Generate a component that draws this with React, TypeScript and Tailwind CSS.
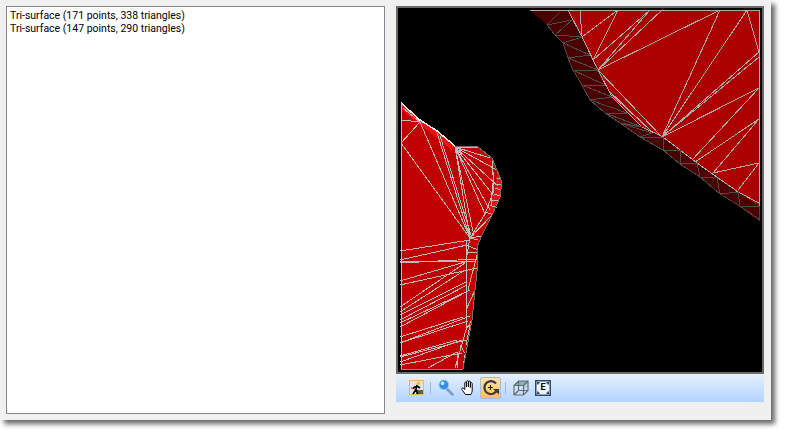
type Seg = [number, number, number, number];

// all mesh coordinates are page pixels, the svg viewBox is shifted to match
const LOWER_EDGE =
  '455,146 478,147 492,158 497,170 502,182 500,197 492,215 482,235 477,247 478,262 475,290 472,320 463,369';
const LOWER_OUTLINE = `401,103 420,120 437,131 ${LOWER_EDGE} 401,369`;

const LOWER_LINES: Seg[] = [
  [401, 120, 420, 122], [403, 108, 420, 122], [420, 122, 401, 143], [401, 143, 470, 238],
  [420, 122, 470, 238], [437, 133, 470, 238], [440, 136, 472, 238], [455, 147, 470, 238], [455, 147, 474, 236],
  [455, 147, 485, 214], [455, 147, 490, 210], [455, 147, 494, 196], [455, 147, 498, 186], [455, 147, 497, 170],
  [455, 147, 490, 158], [455, 147, 478, 148], [492, 160, 494, 190], [494, 172, 491, 205], [494, 190, 485, 214],
  [497, 178, 501, 178], [495, 184, 501, 184], [495, 188, 501, 190], [494, 194, 500, 196], [492, 200, 499, 200],
  [490, 205, 497, 208], [486, 212, 493, 215], [485, 214, 470, 238], [492, 215, 470, 238], [470, 238, 478, 240],
  [470, 238, 466, 260], [470, 238, 482, 236], [466, 245, 478, 250], [466, 252, 477, 252],
  [400, 262, 477, 261], [400, 263, 477, 259], [400, 260, 467, 245], [400, 251, 470, 240], [400, 281, 465, 262],
  [400, 285, 477, 268], [400, 307, 465, 263], [400, 312, 465, 270], [400, 315, 466, 282], [400, 320, 467, 285],
  [400, 323, 470, 290], [400, 327, 468, 291], [400, 337, 463, 317], [400, 343, 470, 316], [400, 343, 468, 321],
  [400, 357, 466, 340], [400, 362, 462, 340], [400, 365, 462, 353], [428, 368, 457, 352], [400, 356, 457, 340],
  [466, 240, 466, 330], [466, 330, 455, 368], [457, 352, 458, 368], [465, 355, 463, 368], [477, 255, 468, 290],
  [475, 290, 466, 310], [472, 320, 466, 330], [470, 325, 466, 345], [460, 345, 466, 355],
];

const UPPER_OUTLINE =
  '530,10 759,10 759,216 700,177 663,150 620,123 590,100 573,70 563,43 547,25';

const BAND_OUTLINE =
  '530,10 568,10 582,37 598,70 612,97 642,127 663,137 697,163 738,192 759,206 760,222 700,178 663,151 620,124 590,101 573,70 563,43 547,25';

const UPPER_LINES: Seg[] = [
  [582, 37, 618, 10], [582, 37, 580, 10], [593, 60, 618, 10], [593, 60, 650, 10], [598, 70, 650, 10],
  [598, 70, 662, 10], [598, 70, 720, 10], [662, 137, 720, 10], [662, 137, 747, 10], [747, 10, 759, 52],
  [662, 137, 759, 52], [662, 137, 759, 57], [662, 137, 759, 88], [692, 160, 759, 88], [695, 162, 759, 119],
  [713, 173, 759, 119], [713, 173, 759, 163], [738, 190, 759, 163], [598, 70, 662, 137], [608, 90, 653, 133],
  [612, 95, 650, 130], [568, 10, 582, 37], [582, 37, 598, 70], [598, 70, 612, 97], [612, 97, 642, 127],
  [642, 127, 663, 137], [663, 137, 697, 163], [697, 163, 738, 192], [738, 192, 759, 203], [759, 10, 759, 216],
];

const BAND_OUTER: [number, number][] = [
  [547, 25], [555, 35], [563, 43], [568, 58], [573, 70], [582, 85], [590, 100], [605, 113], [620, 123],
  [640, 137], [663, 150], [680, 164], [700, 177], [720, 194], [740, 206], [760, 220],
];
const BAND_INNER: [number, number][] = [
  [560, 12], [572, 20], [582, 37], [590, 55], [598, 70], [605, 85], [612, 97], [627, 113], [642, 127],
  [652, 133], [663, 137], [680, 150], [697, 163], [717, 178], [738, 192], [759, 206],
];

const BAND_LINES: Seg[] = BAND_OUTER.flatMap((p, i) => {
  const q = BAND_INNER[i];
  const next = BAND_OUTER[i + 1];
  const segs: Seg[] = [[p[0], p[1], q[0], q[1]]];
  if (next) {
    segs.push([p[0], p[1], BAND_INNER[i + 1][0], BAND_INNER[i + 1][1]]);
    segs.push([p[0], p[1], next[0], next[1]]);
  }
  return segs;
});

function Mesh() {
  return (
    <svg viewBox="398 8 364 364" className="block h-full w-full" shapeRendering="crispEdges">
      <polygon points={LOWER_OUTLINE} fill="#c00000" />
      <polygon points="401,103 420,120 437,131 455,146 452,150 436,137 420,125 402,110" fill="#f01010" />
      <polygon points="497,172 502,182 500,197 492,215 488,210 495,192" fill="#e81010" />
      {LOWER_LINES.map((l, i) => (
        <line key={i} x1={l[0]} y1={l[1]} x2={l[2]} y2={l[3]} stroke="#bcbcbc" strokeWidth={1} />
      ))}
      <polyline points={LOWER_EDGE} fill="none" stroke="#707070" strokeWidth={1} />
      <polyline points="401,103 420,120 437,131 455,146" fill="none" stroke="#eeeeee" strokeWidth={1.5} />
      <line x1={401} y1={103} x2={401} y2={369} stroke="#bcbcbc" strokeWidth={1} />
      <line x1={401} y1={369} x2={463} y2={369} stroke="#8a8a8a" strokeWidth={1} />

      <polygon points={UPPER_OUTLINE} fill="#ab0000" />
      <polygon points={BAND_OUTLINE} fill="#4a0000" />
      {UPPER_LINES.map((l, i) => (
        <line key={i} x1={l[0]} y1={l[1]} x2={l[2]} y2={l[3]} stroke="#aaaaaa" strokeWidth={1} />
      ))}
      {BAND_LINES.map((l, i) => (
        <line key={i} x1={l[0]} y1={l[1]} x2={l[2]} y2={l[3]} stroke="#4c4c4c" strokeWidth={1} />
      ))}
      <line x1={530} y1={10} x2={759} y2={10} stroke="#aaaaaa" strokeWidth={1} />
    </svg>
  );
}

function ClimberIcon() {
  return (
    <svg width="15" height="15" viewBox="0 0 15 15" className="block">
      <rect x="0.5" y="0.5" width="14" height="14" fill="#d8e8e0" stroke="#dcb878" />
      <rect x="7" y="10" width="7" height="4" fill="#6a5a48" />
      <path d="M8 5 L7 9.5 L4 14 M7 9.5 L9 14 M8 6 L11 8 M8 6 L4 8" stroke="#000" strokeWidth="1.6" fill="none" />
      <circle cx="9.5" cy="3.2" r="1.8" fill="#f2c200" />
      <path d="M2 8 L6 9" stroke="#c02020" strokeWidth="1.2" />
    </svg>
  );
}

function MagnifierIcon() {
  return (
    <svg width="16" height="17" viewBox="0 0 16 17" className="block">
      <path d="M8 9 L14.5 15.5" stroke="#7f9cc4" strokeWidth="2.6" strokeLinecap="round" />
      <circle cx="5.8" cy="5.8" r="4.8" fill="#2f8fe8" stroke="#9cc4e8" strokeWidth="1" />
      <circle cx="4.6" cy="4.4" r="1.8" fill="#c8e8ff" />
    </svg>
  );
}

function HandIcon() {
  return (
    <svg width="15" height="15" viewBox="0 0 15 15" className="block">
      <path
        d="M4.5 14.5 L0.8 9.5 C0.3 8 2 7.5 2.8 8.5 L3.8 9.5 V3 C3.8 1.8 5.6 1.8 5.6 3 V7 V1.6 C5.6 0.4 7.5 0.4 7.5 1.6 V7 V2 C7.5 0.8 9.4 0.8 9.4 2 V7.5 V3.6 C9.4 2.4 11.2 2.4 11.2 3.6 V10 C11.2 12 10.5 13 10 14.5 Z"
        fill="#ffffff"
        stroke="#000000"
        strokeWidth="1"
        strokeLinejoin="round"
      />
    </svg>
  );
}

function RotateIcon() {
  return (
    <svg width="16" height="16" viewBox="0 0 16 16" className="block">
      <path d="M13 3.5 A6.5 6.5 0 1 0 14 10" fill="none" stroke="#3a3a3a" strokeWidth="2.2" />
      <path d="M10 9 H16 V14.5 Z" fill="#3a3a3a" />
      <path d="M7.5 5 V10 M5 7.5 H10" stroke="#202020" strokeWidth="1.2" />
    </svg>
  );
}

function CubeIcon() {
  return (
    <svg width="16" height="16" viewBox="0 0 16 16" className="block">
      <path d="M5.5 1 H15 L10.5 5.5 H1 Z" fill="#7fb6c6" />
      <path d="M5.5 5.5 H10.5 V10.5 L15 6 V1 L10.5 5.5 Z" fill="#a8d0dc" />
      <path d="M1 5.5 L5.5 1 H15 V10.5 L10.5 15 H1 Z M1 5.5 H10.5 V15 M10.5 5.5 L15 1 M5.5 1 V10.5 H15 M5.5 10.5 L1 15" fill="none" stroke="#6c6c6c" strokeWidth="1.2" />
    </svg>
  );
}

function ExtentsIcon() {
  return (
    <svg width="16" height="16" viewBox="0 0 16 16" className="block">
      <rect x="0" y="0" width="16" height="16" fill="#2c4a6c" />
      <rect x="1.5" y="1.5" width="13" height="13" fill="#eef3f8" />
      <path d="M2 2 H4.5 V3.5 H3.5 V4.5 H2 Z M14 2 H11.5 V3.5 H12.5 V4.5 H14 Z M2 14 H4.5 V12.5 H3.5 V11.5 H2 Z M14 14 H11.5 V12.5 H12.5 V11.5 H14 Z" fill="#2c4a6c" />
    </svg>
  );
}

function Separator() {
  return <div className="h-[12px] w-px bg-[#9db8d4]" />;
}

export default function App() {
  return (
    <div className="h-[435px] w-[786px] overflow-hidden bg-white font-['Roboto',sans-serif]">
      <div className="flex h-[420px] w-[771px] gap-[11px] bg-[#f0f0f0] pl-[6px] pt-[6px] shadow-[4px_4px_5px_rgba(0,0,0,0.6)]">
        <div className="h-[408px] w-[379px] border border-[#828790] bg-white px-[3px] py-[2px] text-[10.5px] leading-[13px] text-black">
          <div>Tri-surface (171 points, 338 triangles)</div>
          <div>Tri-surface (147 points, 290 triangles)</div>
        </div>
        <div className="flex w-[368px] flex-col">
          <div className="h-[368px] border-2 border-[#6a6a6a] bg-black">
            <Mesh />
          </div>
          <div className="mt-[1px] flex h-[27px] items-center bg-gradient-to-b from-[#e4efff] to-[#b2d3ff] pb-[2px] pl-[13px]">
            <ClimberIcon />
            <div className="ml-[6px]"><Separator /></div>
            <div className="ml-[7px]"><MagnifierIcon /></div>
            <div className="ml-[7px]"><HandIcon /></div>
            <div className="ml-[4px] flex h-[22px] w-[21px] items-center justify-center rounded-[2px] border border-[#a8bcd4] bg-gradient-to-b from-[#ffe2a8] to-[#f9bd62]"><RotateIcon /></div>
            <div className="ml-[4px]"><Separator /></div>
            <div className="ml-[7px]"><CubeIcon /></div>
            <div className="relative ml-[6px] flex h-[16px] w-[16px] items-center justify-center">
              <ExtentsIcon />
              <span className="absolute inset-0 flex items-center justify-center text-[9px] font-bold leading-none text-black">E</span>
            </div>
          </div>
        </div>
      </div>
    </div>
  );
}
